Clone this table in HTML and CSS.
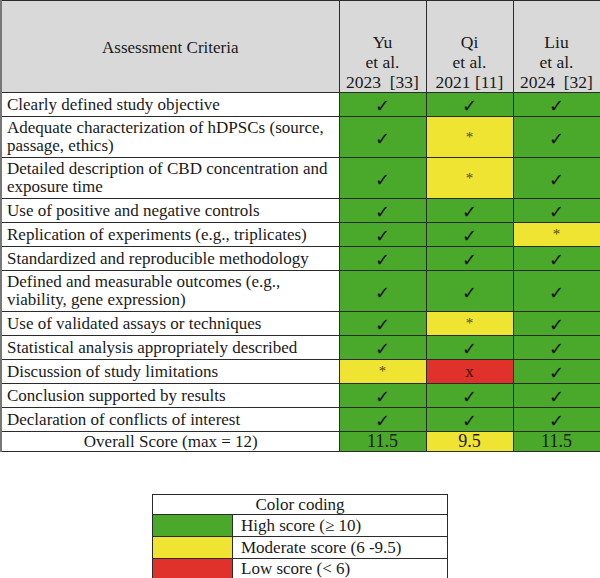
FILE: index.html
```html
<!DOCTYPE html>
<html>
<head>
<meta charset="utf-8">
<link rel="stylesheet" href="styles.css">
</head>
<body>
<div class="page">
<table class="qa">
  <colgroup><col class="c-crit"><col class="c-st"><col class="c-st"><col class="c-st"></colgroup>
  <thead>
    <tr class="head">
      <th class="crit-h">Assessment Criteria</th>
      <th class="st-h">Yu<br>et al.<br>2023&nbsp; [33]</th>
      <th class="st-h">Qi<br>et al.<br>2021 [11]</th>
      <th class="st-h">Liu<br>et al.<br>2024&nbsp; [32]</th>
    </tr>
  </thead>
  <tbody>
    <tr class="r1"><td class="crit">Clearly defined study objective</td><td class="g ck">✓</td><td class="g ck">✓</td><td class="g ck">✓</td></tr>
    <tr class="r2"><td class="crit">Adequate characterization of hDPSCs (source, passage, ethics)</td><td class="g ck">✓</td><td class="y ast">*</td><td class="g ck">✓</td></tr>
    <tr class="r2"><td class="crit">Detailed description of CBD concentration and exposure time</td><td class="g ck">✓</td><td class="y ast">*</td><td class="g ck">✓</td></tr>
    <tr class="r1"><td class="crit">Use of positive and negative controls</td><td class="g ck">✓</td><td class="g ck">✓</td><td class="g ck">✓</td></tr>
    <tr class="r1"><td class="crit">Replication of experiments (e.g., triplicates)</td><td class="g ck">✓</td><td class="g ck">✓</td><td class="y ast">*</td></tr>
    <tr class="r1"><td class="crit">Standardized and reproducible methodology</td><td class="g ck">✓</td><td class="g ck">✓</td><td class="g ck">✓</td></tr>
    <tr class="r2"><td class="crit">Defined and measurable outcomes (e.g., viability, gene expression)</td><td class="g ck">✓</td><td class="g ck">✓</td><td class="g ck">✓</td></tr>
    <tr class="r1"><td class="crit">Use of validated assays or techniques</td><td class="g ck">✓</td><td class="y ast">*</td><td class="g ck">✓</td></tr>
    <tr class="r1"><td class="crit">Statistical analysis appropriately described</td><td class="g ck">✓</td><td class="g ck">✓</td><td class="g ck">✓</td></tr>
    <tr class="r1"><td class="crit">Discussion of study limitations</td><td class="y ast">*</td><td class="r xx">x</td><td class="g ck">✓</td></tr>
    <tr class="r1"><td class="crit">Conclusion supported by results</td><td class="g ck">✓</td><td class="g ck">✓</td><td class="g ck">✓</td></tr>
    <tr class="r1"><td class="crit">Declaration of conflicts of interest</td><td class="g ck">✓</td><td class="g ck">✓</td><td class="g ck">✓</td></tr>
    <tr class="rs"><td class="crit total">Overall Score (max = 12)</td><td class="g num">11.5</td><td class="y num">9.5</td><td class="g num">11.5</td></tr>
  </tbody>
</table>

<table class="legend">
  <colgroup><col class="l-sw"><col class="l-tx"></colgroup>
  <tr class="lt"><td class="l-title" colspan="2">Color coding</td></tr>
  <tr class="lr"><td class="g"></td><td class="l-lab">High score (≥ 10)</td></tr>
  <tr class="lr"><td class="y"></td><td class="l-lab">Moderate score (6 -9.5)</td></tr>
  <tr class="ll"><td class="r"></td><td class="l-lab">Low score (&lt; 6)</td></tr>
</table>
</div>
</body>
</html>
```
FILE: styles.css
```css
html, body {
  margin: 0;
  padding: 0;
  background: #ffffff;
}
body {
  font-family: "Liberation Serif", "DejaVu Serif", serif;
  color: #1a1a1a;
  font-size: 17px;
}
.page {
  width: 600px;
  height: 578px;
  overflow: hidden;
  display: flex;
  flex-direction: column;
  align-items: flex-start;
}
.qa {
  border-collapse: collapse;
  table-layout: fixed;
  width: 600px;
  border: 1px solid #555;
}
.c-crit { width: 338px; }
.c-st { width: 87px; }
.qa th, .qa td {
  border: 1px solid #2b2b2b;
  padding: 0;
}
.qa th {
  background: #d9d9d9;
  font-weight: normal;
}
.head { height: 92px; }
.crit-h {
  text-align: center;
  vertical-align: middle;
  font-size: 17px;
  padding-top: 3px !important;
  border-left: 2px solid #777 !important;
}
.st-h {
  text-align: center;
  vertical-align: bottom;
  line-height: 20px;
  font-size: 17.5px;
  padding-bottom: 0 !important;
}
.crit {
  text-align: left;
  padding: 0 4px 0 5px !important;
  line-height: 18px;
  vertical-align: middle;
  border-left: 2px solid #777 !important;
}
.r1 { height: 24px; }
.r2 { height: 41px; }
.rs { height: 20px; }
.total {
  text-align: center !important;
  line-height: 18px;
}
.g { background: #4aa82b; }
.y { background: #f0e433; }
.r { background: #e0322a; }
.ck {
  text-align: center;
  vertical-align: middle;
  font-family: "DejaVu Sans", sans-serif;
  font-size: 18px;
  line-height: 18px;
  padding-top: 3px !important;
  color: #111;
}
.ast {
  text-align: center;
  vertical-align: middle;
  font-size: 15px;
  color: #4a4a10;
}
.xx {
  text-align: center;
  vertical-align: middle;
  color: #3a0d08;
  font-size: 17px;
}
.num {
  text-align: center;
  vertical-align: bottom;
  line-height: 19px;
  font-size: 18px;
}
.legend {
  border-collapse: collapse;
  table-layout: fixed;
  width: 296px;
  margin: 42px 0 0 152px;
}
.l-sw { width: 80px; }
.legend td {
  border: 1px solid #2b2b2b;
  padding: 0;
  line-height: 18px;
}
.lt td { height: 19px; }
.lr td { height: 21px; }
.ll td { height: 20px; }
.l-title {
  text-align: center;
}
.l-lab {
  padding-left: 8px !important;
  text-align: left;
}
```
